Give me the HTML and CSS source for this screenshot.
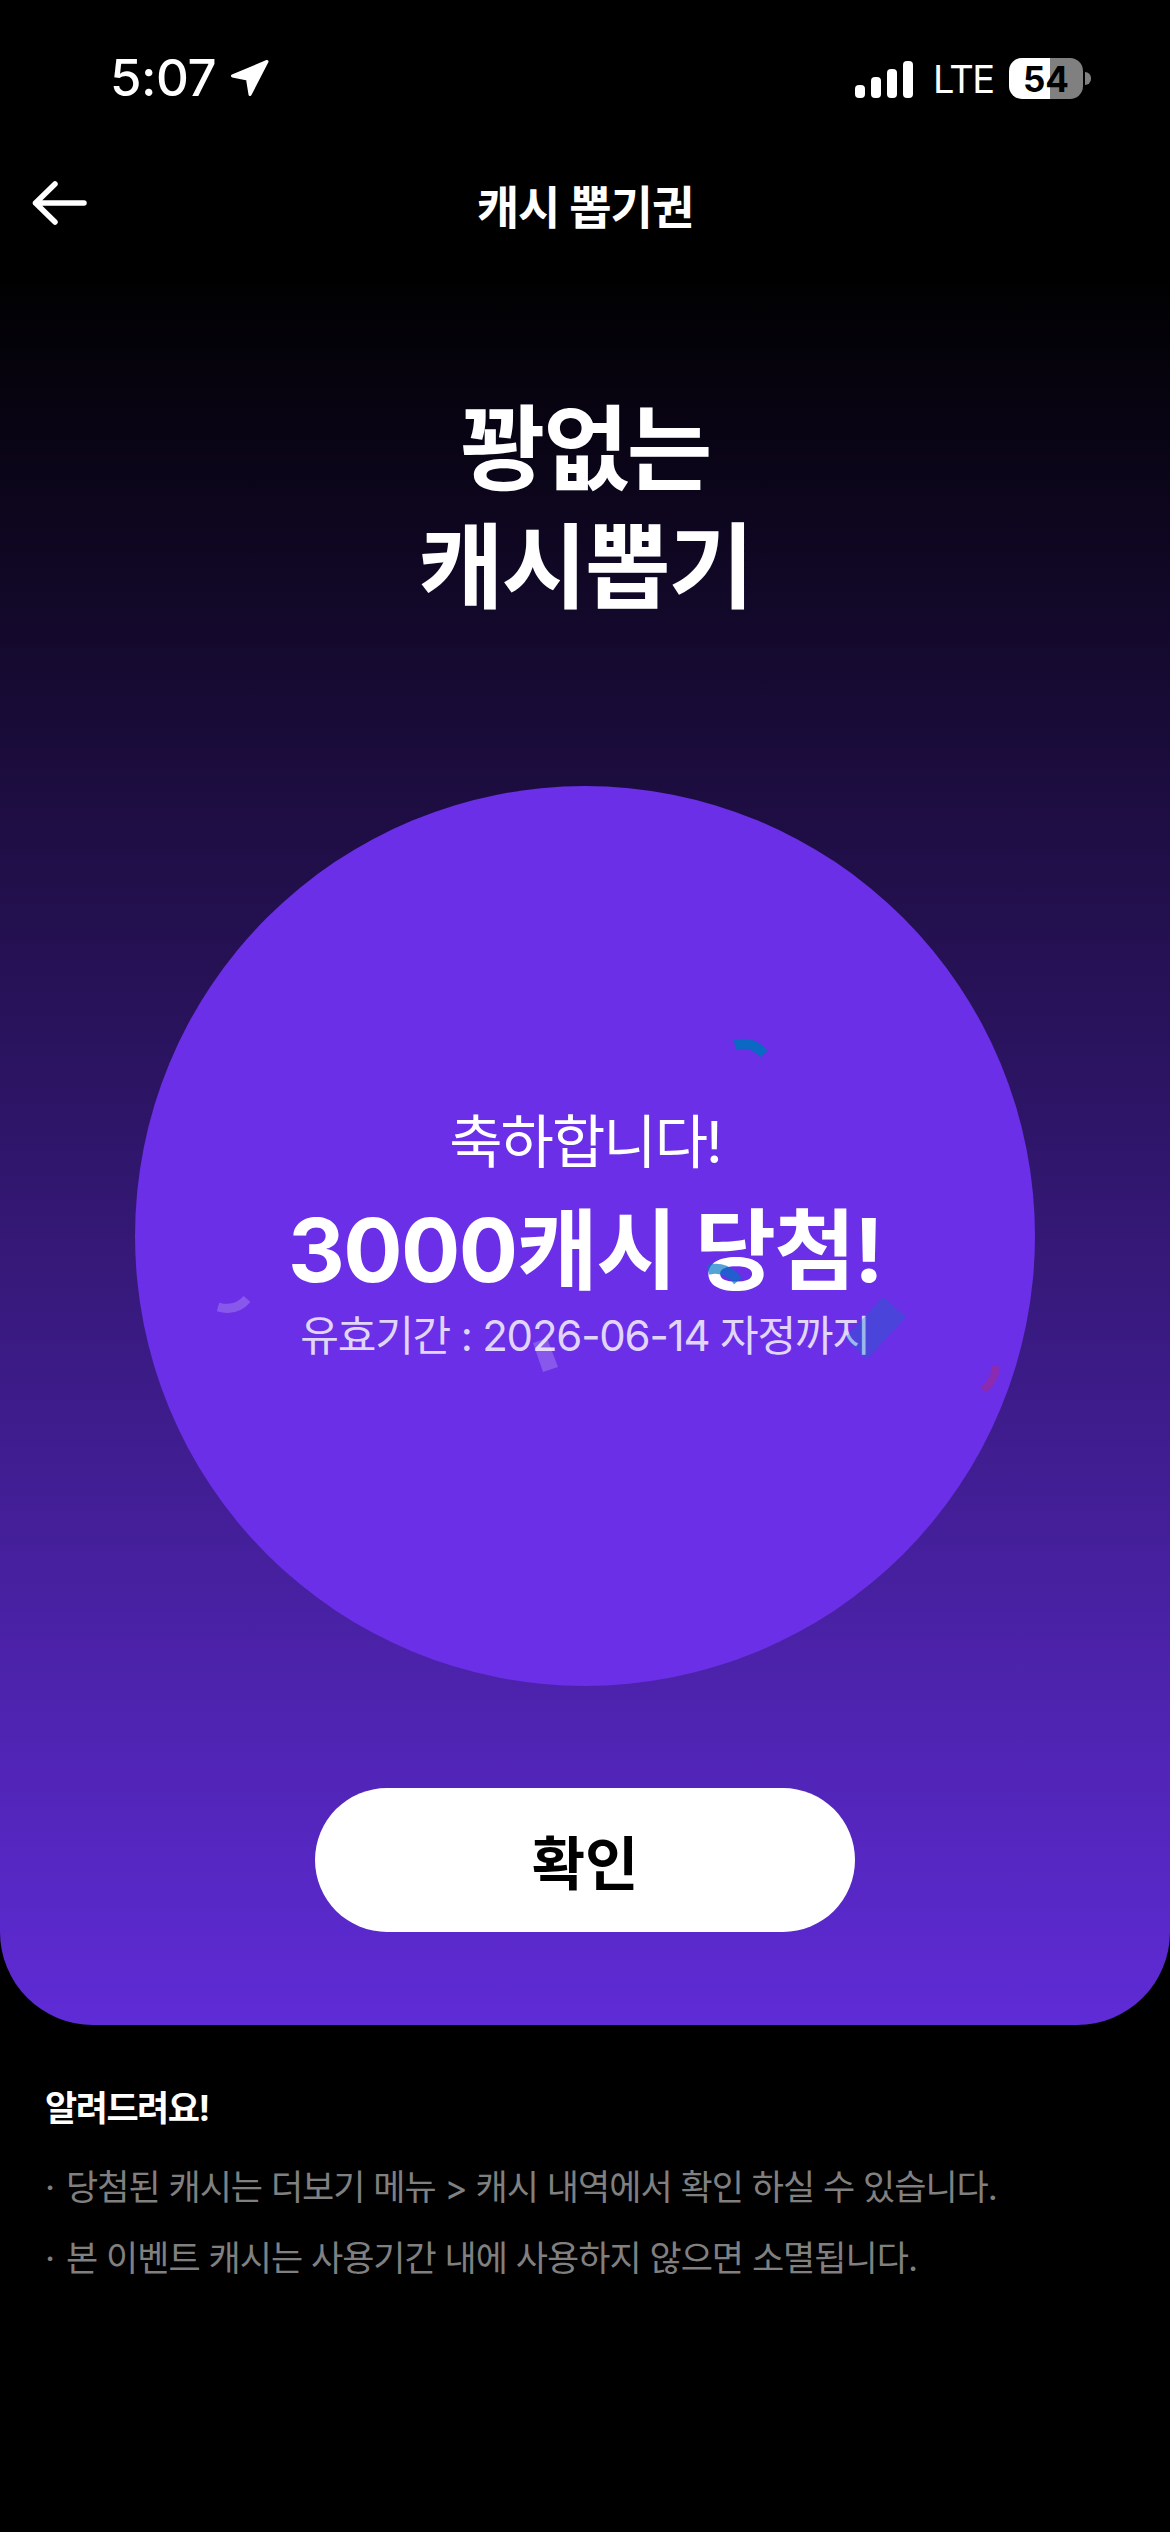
FILE: index.html
```html
<!DOCTYPE html>
<html lang="ko">
<head>
    <meta charset="UTF-8">
    <meta name="viewport" content="width=device-width, initial-scale=1.0">
    <title>캐시 뽑기권</title>
    <link rel="stylesheet" href="styles.css">
</head>
<body>

    <section class="hero">
        <!-- Status bar -->
        <div class="status-bar">
            <div class="status-left">
                <span class="clock">5:07</span>
                <svg class="location" width="40" height="38" viewBox="0 0 40 38">
                    <path d="M37 2.5 L2.5 17 L17.5 20 L20 35.5 Z" fill="#fff" stroke="#fff" stroke-width="3" stroke-linejoin="round"/>
                </svg>
            </div>
            <div class="status-right">
                <div class="signal">
                    <span class="bar bar-1"></span>
                    <span class="bar bar-2"></span>
                    <span class="bar bar-3"></span>
                    <span class="bar bar-4"></span>
                </div>
                <span class="network">LTE</span>
                <div class="battery"><span class="battery-level">54</span></div>
                <span class="battery-tip"></span>
            </div>
        </div>

        <!-- Header -->
        <header class="nav">
            <svg class="back" width="56" height="44" viewBox="0 0 56 44">
                <path d="M23 3 L3.5 22 L23 41 M3.5 22 L52 22" fill="none" stroke="#fff" stroke-width="5.5" stroke-linecap="round" stroke-linejoin="round"/>
            </svg>
            <h2 class="nav-title">캐시 뽑기권</h2>
        </header>

        <h1 class="headline">꽝없는<br>캐시뽑기</h1>

        <!-- Result circle -->
        <div class="circle">
            <p class="congrats">축하합니다!</p>
            <p class="prize">3000캐시 당첨!</p>
            <p class="expire">유효기간 : 2026-06-14 자정까지</p>
            <svg class="confetti" width="900" height="900" viewBox="135 786 900 900">
                <path d="M735 1045 Q752 1040 764 1054" fill="none" stroke="#0b69c4" stroke-width="10"/>
                <path d="M218 1307 Q236 1312 247 1299" fill="none" stroke="#fff" stroke-opacity="0.2" stroke-width="9"/>
                <polygon points="533,1343 547,1338 558,1367 543,1372" fill="#fff" fill-opacity="0.2"/>
                <polygon points="883,1297 906,1317 867,1359 845,1338" fill="#0076c2" fill-opacity="0.3"/>
                <path d="M996 1366 Q995 1381 983 1390" fill="none" stroke="#a02a90" stroke-opacity="0.6" stroke-width="8"/>
                <path d="M708 1270 Q725 1265 738 1281" fill="none" stroke="#0076c2" stroke-opacity="0.67" stroke-width="10"/>
            </svg>
        </div>

        <button class="confirm">확인</button>
    </section>

    <!-- Notice -->
    <section class="notice">
        <h3>알려드려요!</h3>
        <ul>
            <li>당첨된 캐시는 더보기 메뉴 &gt; 캐시 내역에서 확인 하실 수 있습니다.</li>
            <li>본 이벤트 캐시는 사용기간 내에 사용하지 않으면 소멸됩니다.</li>
        </ul>
    </section>

</body>
</html>
```

FILE: styles.css
```css
* {
    box-sizing: border-box;
}
body {
    margin: 0;
    width: 1170px;
    height: 2532px;
    overflow: hidden;
    background-color: #000;
    color: #fff;
    font-family: Inter, "Noto Sans CJK KR", sans-serif;
}
p, h1, h2, h3, ul {
    margin: 0;
    padding: 0;
}

.hero {
    height: 2025px;
    display: flex;
    flex-direction: column;
    align-items: center;
    border-radius: 0 0 93px 93px;
    background: linear-gradient(180deg, #000 270px, #5f2bd6 2025px);
}

/* status bar */
.status-bar {
    width: 100%;
    height: 154px;
    display: flex;
    justify-content: space-between;
    align-items: flex-start;
    padding: 58px 79px 0 110px;
}
.status-left {
    display: flex;
    align-items: center;
    gap: 14px;
}
.clock {
    font-size: 51px;
    line-height: 40px;
    font-weight: 500;
    letter-spacing: -0.5px;
}
.status-right {
    display: flex;
    align-items: center;
    height: 41px;
}
.signal {
    display: flex;
    align-items: flex-end;
    gap: 6px;
    height: 37px;
    margin-top: 2px;
}
.bar {
    width: 10px;
    border-radius: 4px;
    background: #fff;
}
.bar-1 { height: 13px; }
.bar-2 { height: 21px; }
.bar-3 { height: 29px; }
.bar-4 { height: 37px; }
.network {
    margin-left: 20px;
    width: 57px;
    font-size: 38px;
    font-weight: 400;
    letter-spacing: -1.5px;
    white-space: nowrap;
}
.battery {
    margin-left: 19px;
    width: 74px;
    height: 41px;
    border-radius: 13px;
    background: linear-gradient(90deg, #fff 41px, #808080 41px);
    display: flex;
    justify-content: center;
    align-items: center;
}
.battery-level {
    color: #000;
    font-size: 35px;
    font-weight: 700;
}
.battery-tip {
    width: 6px;
    height: 13px;
    margin-left: 2px;
    border-radius: 0 6px 6px 0;
    background: #808080;
}

/* header */
.nav {
    position: relative;
    width: 100%;
    height: 100px;
    text-align: center;
}
.back {
    position: absolute;
    left: 32px;
    top: 27px;
}
.nav-title {
    padding-top: 3px;
    font-size: 46px;
    line-height: 100px;
    font-weight: 700;
    letter-spacing: -1px;
}

.headline {
    margin-top: 136px;
    height: 236px;
    font-size: 93px;
    line-height: 118px;
    font-weight: 700;
    text-align: center;
    letter-spacing: -2px;
}

/* circle */
.circle {
    position: relative;
    width: 900px;
    height: 900px;
    margin-top: 160px;
    border-radius: 50%;
    background: #6a2fe6;
    display: flex;
    flex-direction: column;
    align-items: center;
    padding-top: 318px;
}
.congrats {
    font-size: 58px;
    line-height: 76px;
    letter-spacing: -2px;
}
.prize {
    margin-top: 14px;
    font-size: 88px;
    line-height: 112px;
    font-weight: 700;
    letter-spacing: -1.5px;
}
.expire {
    font-size: 42px;
    line-height: 60px;
    color: #e1d5fa;
    letter-spacing: -1.2px;
}
.confetti {
    position: absolute;
    left: 0;
    top: 0;
}

.confirm {
    margin-top: 102px;
    width: 540px;
    height: 144px;
    border: none;
    border-radius: 72px;
    background: #fff;
    color: #000;
    font-family: inherit;
    font-size: 58px;
    font-weight: 700;
}

/* notice */
.notice {
    padding: 58px 45px 0;
}
.notice h3 {
    font-size: 35px;
    line-height: 50px;
    font-weight: 700;
    letter-spacing: -1.5px;
}
.notice ul {
    margin-top: 19px;
    list-style: none;
}
.notice li {
    position: relative;
    padding-left: 21px;
    font-size: 35px;
    line-height: 71px;
    color: #808080;
    letter-spacing: -1px;
}
.notice li::before {
    content: "·";
    position: absolute;
    left: 0;
}
```
